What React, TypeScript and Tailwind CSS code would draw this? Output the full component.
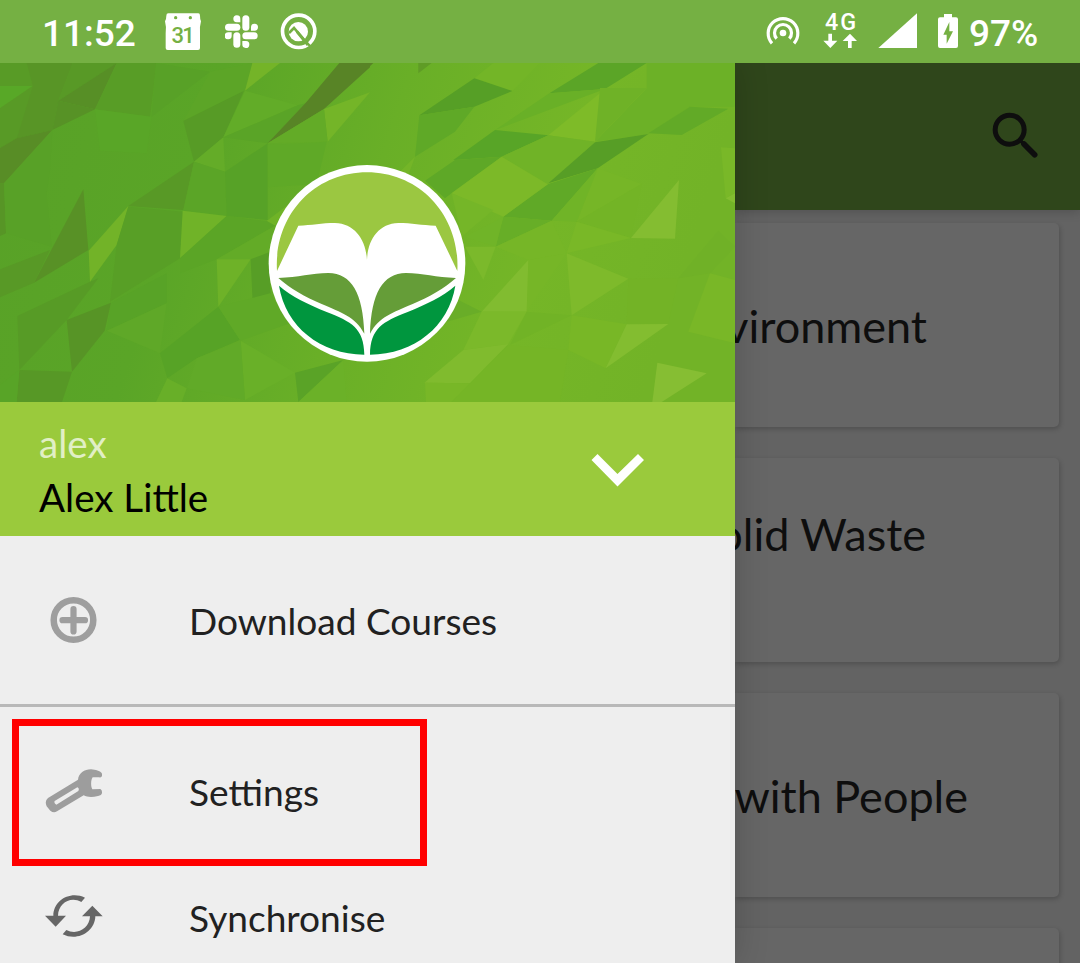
import React from "react";

type Facet = [points: string, fill: string];

const leftFacets: Facet[] = [
  ["0,9 80,9 98,78 0,78", "#589b26"],
  ["0,78 98,78 0,145", "#58a827"],
  ["0,145 98,78 50,235 0,264", "#589a26"],
  ["80,9 218,9 175,122 157,210 50,235 98,78", "#589526"],
  ["218,9 350,9 175,122", "#589926"],
  ["175,122 350,9 285,148", "#578f26"],
  ["175,122 285,148 157,210", "#579226"],
  ["0,264 50,235 157,210 12,370 0,370", "#588d26"],
  ["0,370 12,370 18,520 0,528", "#579526"],
  ["12,370 157,210 150,330 140,400 155,560 18,520", "#58a127"],
  ["350,9 468,9 460,90 450,170 285,148", "#589d26"],
  ["285,148 455,170 440,280 300,272", "#59a627"],
  ["468,9 630,35 455,170 462,85", "#58a127"],
  ["630,35 757,9 735,92 550,183", "#5ca527"],
  ["250,388 265,570 102,668", "#589126"],
  ["0,628 150,570 102,668 0,712", "#589926"],
  ["52,768 270,665 295,655 200,780 58,930", "#579b26"],
  ["200,780 333,728 314,812 216,935", "#579426"],
  ["58,930 216,935 186,1026 50,1026", "#579826"],
  ["0,975 58,930 50,1026 0,1026", "#58a427"],
  ["385,438 350,555 270,665 266,572", "#72b328"],
  ["385,438 582,305 550,450", "#589926"],
  ["385,440 550,455 540,595 330,725 350,555", "#589f26"],
  ["550,183 732,92 670,232 582,305", "#579b26"],
  ["757,9 840,9 735,92", "#74b428"],
  ["735,92 893,136 670,232", "#62ac28"],
  ["893,136 915,130 803,250 670,232", "#5aa427"],
  ["1018,9 1110,9 1110,22 972,147 803,250 920,125", "#588426"],
  ["972,147 1110,97 983,245", "#74b528"],
  ["803,250 972,147 983,245", "#63ab27"],
  ["670,232 675,335 582,305", "#64ac28"],
  ["582,305 675,335 680,468 550,450", "#5ba527"],
  ["675,335 803,250 803,480 680,468", "#57a227"],
  ["803,255 980,245 950,372 805,382", "#5fa927"],
  ["548,452 680,468 540,595", "#70b328"],
  ["800,483 870,430 825,497", "#6fb327"],
  ["680,468 800,483 825,497 650,598 540,640 540,595", "#5ba526"],
  ["650,598 825,497 815,580 752,598", "#63ab27"],
  ["650,598 752,598 655,740", "#6eb228"],
  ["752,598 807,577 812,705 758,730", "#579e26"],
  ["333,728 500,640 500,730 320,812", "#58a327"],
  ["320,812 500,730 480,880", "#5fa828"],
  ["480,880 655,740 720,840 590,895 502,955", "#57a326"],
  ["722,842 885,938 735,1020", "#69b028"],
  ["590,895 722,842 735,1020 560,985", "#61aa28"],
  ["502,955 560,985 545,1026 468,1026", "#68af28"],
  ["885,938 1030,900 895,1026", "#5aa327"],
  ["1030,900 1040,1026 895,1026", "#6bb128"],
  ["655,740 810,700 870,790 722,842", "#60a927"],
];

const rightFacets: Facet[] = [
  ["845,9 1110,9 1110,140 975,140 850,222 690,245 845,84", "#6cb127"],
  ["0,9 25,9 0,32", "#588426"],
  ["160,9 200,9 160,40", "#5f9c26"],
  ["385,9 525,9 442,93 328,55", "#73b527"],
  ["328,55 442,93 328,140 163,166", "#569f26"],
  ["163,166 328,140 270,215 150,290", "#5fa927"],
  ["553,100 700,9 845,9 720,87", "#5ba527"],
  ["553,100 720,87 390,210", "#69b027"],
  ["720,87 845,84 690,245 550,226", "#7ebb28"],
  ["705,84 845,84 690,245", "#6fb227"],
  ["390,210 550,226 410,290 265,300", "#58a527"],
  ["410,290 265,395 240,415 180,362 270,300", "#5ea827"],
  ["550,226 690,245 548,373 410,290", "#70b327"],
  ["850,222 690,247 550,370 698,325", "#579e26"],
  ["550,372 698,325 560,482 415,470", "#60a927"],
  ["415,470 560,482 392,560", "#67ae27"],
  ["850,220 975,140 1090,146 950,225", "#62aa27"],
  ["410,290 548,373 415,470 260,400", "#7cb928"],
  ["260,400 385,450 290,530", "#75b628"],
  ["150,290 130,345 105,335", "#74b528"],
  ["698,325 830,372 635,485", "#76b627"],
  ["698,325 635,485 560,482", "#70b427"],
  ["635,485 830,372 798,534", "#73b426"],
  ["635,485 798,534 605,580", "#79b827"],
  ["1068,262 1110,265 1110,400 1082,415", "#79b828"],
  ["1082,415 1110,400 1110,430", "#83bd30"],
  ["942,360 930,536 798,534", "#84bd31"],
  ["300,530 415,470 392,560", "#70b428"],
  ["392,560 560,482 605,580 490,600", "#76b627"],
  ["300,560 392,560 355,660", "#7bb92b"],
  ["605,580 790,656 620,766", "#7eba2b"],
  ["490,600 605,580 485,755", "#76b627"],
  ["490,600 485,755 350,755", "#81bc30"],
  ["295,870 350,755 485,755 430,852", "#7bb92a"],
  ["350,755 270,715 245,785", "#69ad28"],
  ["485,755 620,766 435,855", "#71b326"],
  ["790,656 940,655 910,792 785,793", "#73b326"],
  ["940,655 1060,512 1110,560 1035,640", "#70b127"],
  ["1035,640 1110,660 1110,850 970,815", "#79b727"],
  ["620,766 785,793 722,925 610,870", "#78b726"],
  ["785,793 910,792 722,925", "#83bd30"],
  ["877,908 1025,940 890,1026 862,1026", "#86be33"],
  ["295,870 430,852 315,970 178,968", "#80bb2e"],
  ["180,968 315,970 260,1026 183,1026", "#78b727"],
  ["430,855 610,870 585,1026 260,1026 315,970", "#75b526"],
];

function Facets({ items, x }: { items: Facet[]; x: number }) {
  return (
    <g transform={`translate(${x} 60) scale(0.33333)`}>
      {items.map(([points, fill]) => (
        <polygon key={points} points={points} fill={fill} />
      ))}
    </g>
  );
}

function Banner() {
  return (
    <svg className="block h-[339px] w-[735px] shrink-0" viewBox="0 63 735 339">
      <defs>
        <linearGradient id="base" x1="0" y1="0" x2="1" y2="0.15">
          <stop offset="0" stopColor="#58a127" />
          <stop offset="0.3" stopColor="#5aa527" />
          <stop offset="0.55" stopColor="#69af27" />
          <stop offset="0.8" stopColor="#75b627" />
          <stop offset="1" stopColor="#72b327" />
        </linearGradient>
      </defs>
      <rect x="0" y="63" width="735" height="339" fill="url(#base)" />
      <Facets items={leftFacets} x={0} />
      <Facets items={rightFacets} x={365} />
      <g transform="translate(255 150) scale(0.33333)">
        <circle cx="336" cy="340" r="295" fill="#fff" />
        <path
          d="M66 363C56 200 175 67 336 67S616 200 607 363L542 227C500 226 470 219 430 219C370 221 338 270 336 330C333 270 300 221 240 219C200 219 170 226 130 227Z"
          fill="#9bc741"
        />
        <path
          d="M70 384C130 382 170 369 220 369C290 370 324 430 328 551C300 500 260 488 200 462C150 441 105 415 70 384Z"
          fill="#659d38"
        />
        <path
          d="M603 384C543 382 503 369 453 369C383 370 349 430 345 551C373 500 413 488 473 462C523 441 568 415 603 384Z"
          fill="#659d38"
        />
        <path
          d="M72 407C110 440 160 463 215 486C290 515 327 535 328 614C195 612 92 530 72 407Z"
          fill="#00963e"
        />
        <path
          d="M601 407C563 440 513 463 458 486C383 515 346 535 345 614C478 612 581 530 601 407Z"
          fill="#00963e"
        />
      </g>
    </svg>
  );
}

function StatusBar() {
  return (
    <header className="flex h-[63px] shrink-0 items-start bg-[#75b043] text-white">
      <span className="ml-[42px] mt-[12px] w-[123px] font-['Roboto',sans-serif] text-[37px] font-medium leading-[44px]">
        11:52
      </span>
      <svg className="h-[63px] w-[36px]" viewBox="495 0 108 189">
        <path
          d="M505 40H595Q600 40 600 47Q600 58 603 64Q598 82 600 100V144Q600 150 594 150H503Q497 150 497 144V100Q500 82 495 64Q499 58 499 47Q499 40 505 40Z"
          fill="#fff"
        />
        <circle cx="527" cy="53" r="5" fill="#75b043" />
        <circle cx="571" cy="53" r="5" fill="#75b043" />
        <text
          x="547"
          y="128"
          textAnchor="middle"
          fill="#75b043"
          fontFamily="Roboto"
          fontWeight="500"
          fontSize="66"
          letterSpacing="-5"
        >
          31
        </text>
      </svg>
      <svg className="ml-[23.500px] h-[63px] w-[33px]" viewBox="674 0 99 189" fill="#fff">
        <path d="M720 67H709A10.500 10.500 0 1 1 720 56Z" />
        <rect x="674" y="71" width="46" height="21" rx="10.500" />
        <rect x="726" y="46" width="21" height="46" rx="10.500" />
        <path d="M752 92V81A10.500 10.500 0 1 1 762 92Z" />
        <rect x="726" y="97" width="46" height="21" rx="10.500" />
        <path d="M726 123H737A10.500 10.500 0 1 1 726 133Z" />
        <rect x="699" y="97" width="21" height="46" rx="10.500" />
        <path d="M694 97V108A10.500 10.500 0 1 1 684 97Z" />
      </svg>
      <svg className="ml-[22.500px] h-[63px] w-[37px]" viewBox="841 0 111 189">
        <circle cx="897" cy="94" r="48.500" fill="none" stroke="#fff" strokeWidth="11" />
        <circle cx="896" cy="95" r="29" fill="#fff" />
        <path d="M868 99L883 84L924 132" fill="none" stroke="#75b043" strokeWidth="8" />
        <path d="M921 128L937 144" stroke="#75b043" strokeWidth="7" />
        <path d="M892 95L925 135" stroke="#75b043" strokeWidth="9" />
      </svg>
      <svg className="ml-auto h-[63px] w-[35px]" viewBox="76 0 105 189">
        <g fill="none" stroke="#fff" strokeWidth="9.500">
          <path d="M94 130A44.500 44.500 0 1 1 160 130" />
          <path d="M108 116A25.500 25.500 0 1 1 146 116" />
        </g>
        <circle cx="127" cy="99" r="10" fill="#fff" />
      </svg>
      <svg className="ml-[20px] h-[63px] w-[40px]" viewBox="243 0 120 189" fill="#fff">
        <text
          x="255"
          y="91"
          fontFamily="Roboto"
          fontWeight="500"
          fontSize="70"
          letterSpacing="6"
        >
          4G
        </text>
        <path d="M265 101H276V122H292L271 144L250 122H265ZM324 144V123H308L330 101L351 123H335V144Z" />
      </svg>
      <svg className="ml-[17px] h-[63px] w-[39px]" viewBox="414 0 117 189">
        <path d="M415 144L531 40V144Z" fill="#fff" />
      </svg>
      <svg className="ml-[20px] h-[63px] w-[22px]" viewBox="591 0 66 189">
        <path
          d="M612 42H636V52H648Q654 52 654 58V138Q654 144 648 144H600Q594 144 594 138V58Q594 52 600 52H612Z"
          fill="#fff"
        />
        <path d="M628 66V94H639L620 131V104H610Z" fill="#75b043" />
      </svg>
      <span className="ml-[10px] mr-[42px] mt-[12px] w-[69px] whitespace-nowrap font-['Roboto',sans-serif] text-[37px] font-medium leading-[44px]">
        97%
      </span>
    </header>
  );
}

function PlusIcon() {
  return (
    <svg className="size-[58px]" viewBox="0 0 58 58" fill="none" stroke="#9e9e9e">
      <circle cx="28.500" cy="29" r="19.800" strokeWidth="6.500" />
      <path d="M28.500 18V40.500M17.500 29.200H40" strokeWidth="6.200" strokeLinecap="round" />
    </svg>
  );
}

function WrenchIcon() {
  return (
    <svg className="h-[46px] w-[58px]" viewBox="134 158 174 138">
      <path
        fillRule="evenodd"
        d="M233 193C235 174 252 162 272 162C286 163 299 167 304 173Q307 180 303 185Q301 187 296 186L277 186C271 194 271 213 276 222L300 221Q306 224 305 233Q304 240 293 242C275 247 261 246 250 240L170 288Q160 294 150 286L139 273Q132 257 143 248ZM163 257L231 216Q238 218 234 227L168 268Q160 264 163 257Z"
        fill="#9d9d9d"
      />
    </svg>
  );
}

function SyncIcon() {
  return (
    <svg className="mt-[-2px] h-[44px] w-[58px]" viewBox="134 538 174 132" fill="#666">
      <path d="M254 549C210 527 159 557 159 603H134L166 636L197 603H173C174 566 210 544 243 562Z" />
      <path d="M187 659C231 681 284 652 285 605H307L276 573L245 605H269C268 641 230 663 198 646Z" />
    </svg>
  );
}

function DrawerItem({ icon, label }: { icon: React.ReactNode; label: string }) {
  return (
    <div className="flex items-center">
      <span className="flex w-[144.500px] shrink-0">{icon}</span>
      <span className="mt-[2px] text-[37.100px] leading-[46px] text-[#212121]">{label}</span>
    </div>
  );
}

function Drawer() {
  return (
    <aside className="z-10 flex w-[735px] shrink-0 flex-col bg-[#eee] shadow-[0_0_32px_rgba(0,0,0,0.18)]">
      <Banner />
      <div className="flex h-[134px] shrink-0 items-center justify-between bg-[#9aca3c] pl-[39px] pr-[90px]">
        <div className="mt-[2px] flex flex-col text-[38.600px] leading-[54px]">
          <span className="text-[#e1efc5]">alex</span>
          <span className="text-black">Alex Little</span>
        </div>
        <svg className="mt-[1px] h-[34px] w-[54px]" viewBox="591 453 54 34">
          <path d="M591.500 460L597.500 454L617.500 474L638 454L644 460L617.500 486.500Z" fill="#fff" />
        </svg>
      </div>
      <div className="flex h-[168px] shrink-0 items-center pl-[44.500px]">
        <DrawerItem icon={<PlusIcon />} label="Download Courses" />
      </div>
      <div className="h-[3px] shrink-0 bg-[#b8b8b8]" />
      <div className="ml-[12px] mt-[12px] flex h-[147px] w-[415px] shrink-0 items-center border-[7px] border-[#f00] pb-[3px] pl-[25.500px]">
        <DrawerItem icon={<WrenchIcon />} label="Settings" />
      </div>
      <div className="flex h-[97px] shrink-0 items-center pl-[44.500px] pt-[5px]">
        <DrawerItem icon={<SyncIcon />} label="Synchronise" />
      </div>
    </aside>
  );
}

function CourseCard({ children, className }: { children?: React.ReactNode; className: string }) {
  return (
    <div
      className={`flex h-[204px] shrink-0 items-start justify-end whitespace-nowrap rounded-r-[5px] bg-[#666] text-[45px] leading-[56px] text-[#0e0e0e] shadow-[1px_2px_5px_rgba(0,0,0,0.2)] ${className}`}
    >
      {children}
    </div>
  );
}

function CourseList() {
  return (
    <main className="flex min-w-0 flex-1 flex-col overflow-hidden bg-[#636363]">
      <div className="flex h-[147px] shrink-0 items-center justify-end bg-[#2f461b] pr-[41px] shadow-[0_2px_10px_rgba(0,0,0,0.18)]">
        <svg className="mt-[-4px] h-[46px] w-[47px]" viewBox="787 154 141 138">
          <circle cx="840" cy="207" r="43.500" fill="none" stroke="#0e0e0e" strokeWidth="15" />
          <path d="M867 236L882 249" stroke="#0e0e0e" strokeWidth="10" />
          <path d="M883 250L915 282" stroke="#0e0e0e" strokeWidth="17" strokeLinecap="round" />
        </svg>
      </div>
      <div className="flex flex-col gap-[31px] pr-[21px] pt-[13px]">
        <CourseCard className="pr-[132px] pt-[75px]">vironment</CourseCard>
        <CourseCard className="pr-[133px] pt-[48px]">olid Waste</CourseCard>
        <CourseCard className="pr-[91px] pt-[75px]">with People</CourseCard>
        <CourseCard className="" />
      </div>
    </main>
  );
}

export default function App() {
  return (
    <div className="flex h-[963px] w-[1080px] flex-col overflow-hidden font-['Lato',sans-serif]">
      <StatusBar />
      <div className="flex h-[900px] overflow-hidden">
        <Drawer />
        <CourseList />
      </div>
    </div>
  );
}
